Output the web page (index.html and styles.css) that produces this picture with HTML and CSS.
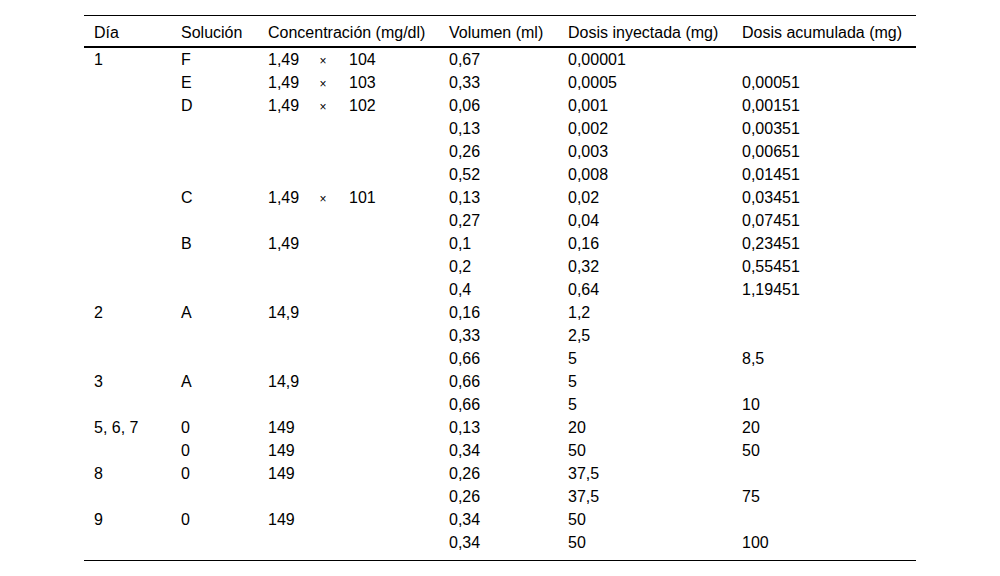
FILE: index.html
```html
<!DOCTYPE html>
<html lang="es">
<head>
<meta charset="utf-8">
<title>Tabla de dosis</title>
<link rel="stylesheet" href="styles.css">
</head>
<body>
<table class="dose-table">
  <colgroup>
    <col class="c1"><col class="c2"><col class="c3"><col class="c4"><col class="c5"><col class="c6">
  </colgroup>
  <thead>
    <tr><th>Día</th><th>Solución</th><th>Concentración (mg/dl)</th><th>Volumen (ml)</th><th>Dosis inyectada (mg)</th><th>Dosis acumulada (mg)</th></tr>
  </thead>
  <tbody>
    <tr><td>1</td><td>F</td><td><span class="m">1,49</span><span class="x">×</span>104</td><td>0,67</td><td>0,00001</td><td></td></tr>
    <tr><td></td><td>E</td><td><span class="m">1,49</span><span class="x">×</span>103</td><td>0,33</td><td>0,0005</td><td>0,00051</td></tr>
    <tr><td></td><td>D</td><td><span class="m">1,49</span><span class="x">×</span>102</td><td>0,06</td><td>0,001</td><td>0,00151</td></tr>
    <tr><td></td><td></td><td></td><td>0,13</td><td>0,002</td><td>0,00351</td></tr>
    <tr><td></td><td></td><td></td><td>0,26</td><td>0,003</td><td>0,00651</td></tr>
    <tr><td></td><td></td><td></td><td>0,52</td><td>0,008</td><td>0,01451</td></tr>
    <tr><td></td><td>C</td><td><span class="m">1,49</span><span class="x">×</span>101</td><td>0,13</td><td>0,02</td><td>0,03451</td></tr>
    <tr><td></td><td></td><td></td><td>0,27</td><td>0,04</td><td>0,07451</td></tr>
    <tr><td></td><td>B</td><td>1,49</td><td>0,1</td><td>0,16</td><td>0,23451</td></tr>
    <tr><td></td><td></td><td></td><td>0,2</td><td>0,32</td><td>0,55451</td></tr>
    <tr><td></td><td></td><td></td><td>0,4</td><td>0,64</td><td>1,19451</td></tr>
    <tr><td>2</td><td>A</td><td>14,9</td><td>0,16</td><td>1,2</td><td></td></tr>
    <tr><td></td><td></td><td></td><td>0,33</td><td>2,5</td><td></td></tr>
    <tr><td></td><td></td><td></td><td>0,66</td><td>5</td><td>8,5</td></tr>
    <tr><td>3</td><td>A</td><td>14,9</td><td>0,66</td><td>5</td><td></td></tr>
    <tr><td></td><td></td><td></td><td>0,66</td><td>5</td><td>10</td></tr>
    <tr><td>5, 6, 7</td><td>0</td><td>149</td><td>0,13</td><td>20</td><td>20</td></tr>
    <tr><td></td><td>0</td><td>149</td><td>0,34</td><td>50</td><td>50</td></tr>
    <tr><td>8</td><td>0</td><td>149</td><td>0,26</td><td>37,5</td><td></td></tr>
    <tr><td></td><td></td><td></td><td>0,26</td><td>37,5</td><td>75</td></tr>
    <tr><td>9</td><td>0</td><td>149</td><td>0,34</td><td>50</td><td></td></tr>
    <tr class="last"><td></td><td></td><td></td><td>0,34</td><td>50</td><td>100</td></tr>
  </tbody>
</table>
</body>
</html>
```

FILE: styles.css
```css
html, body {
  margin: 0;
  padding: 0;
  background: #ffffff;
}

body {
  font-family: "Liberation Sans", Arial, Helvetica, sans-serif;
  font-size: 16px;
  color: #000000;
}

.dose-table {
  width: 832px;
  margin: 15px auto 0;
  border-collapse: collapse;
  table-layout: fixed;
}

.c1 { width: 87px; }
.c2 { width: 87px; }
.c3 { width: 181px; }
.c4 { width: 119px; }
.c5 { width: 174px; }
.c6 { width: 184px; }

.dose-table thead tr {
  border-top: 1px solid #000000;
  border-bottom: 2px solid #000000;
}

.dose-table th {
  font-weight: normal;
  text-align: left;
  padding: 8px 10px 4px;
  line-height: 18px;
  white-space: nowrap;
}

.dose-table td {
  padding: 0 10px;
  height: 23px;
  line-height: 23px;
  text-align: left;
  white-space: nowrap;
  vertical-align: top;
}

.dose-table tr.last td {
  height: 29px;
  padding-bottom: 0;
}

.dose-table tr.last {
  border-bottom: 1px solid #000000;
}

.m {
  display: inline-block;
  width: 50px;
  line-height: 16px;
}

.x {
  display: inline-block;
  width: 10px;
  margin-right: 21px;
  text-align: center;
  font-size: 12px;
  line-height: 12px;
}
```
